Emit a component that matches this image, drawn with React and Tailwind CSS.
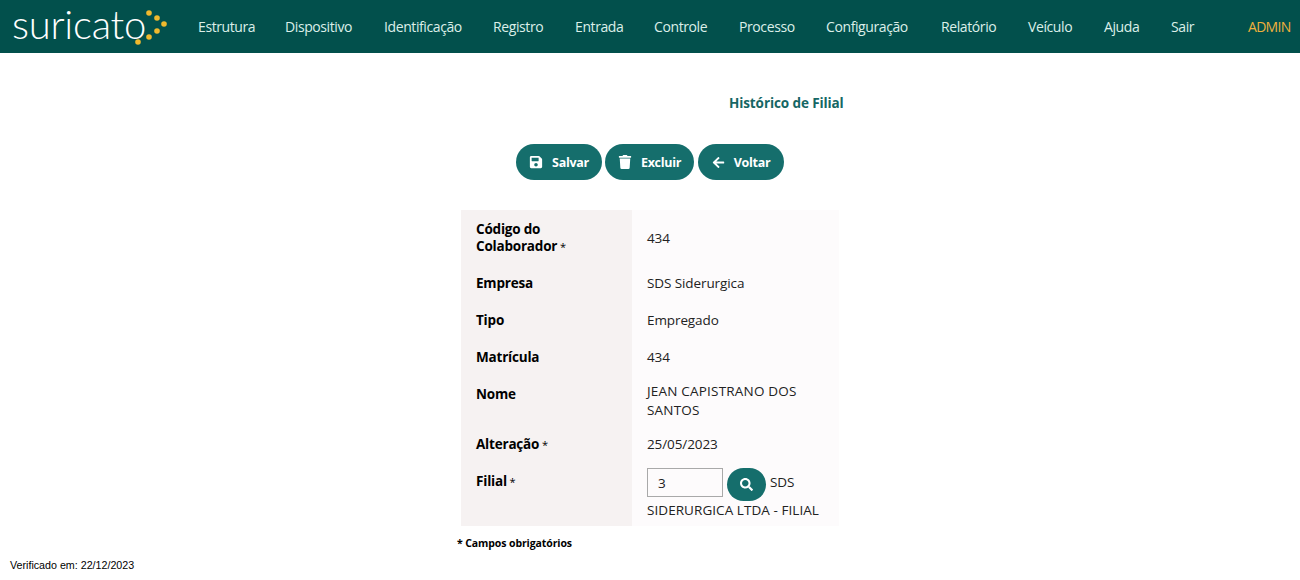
import { FaSave, FaTrash, FaArrowLeft, FaSearch } from "react-icons/fa";

const menu = [
  ["Estrutura", "w-[87px]"],
  ["Dispositivo", "w-[99px]"],
  ["Identificação", "w-[109px]"],
  ["Registro", "w-[82px]"],
  ["Entrada", "w-[79px]"],
  ["Controle", "w-[85px]"],
  ["Processo", "w-[87px]"],
  ["Configuração", "w-[115px]"],
  ["Relatório", "w-[87px]"],
  ["Veículo", "w-[76px]"],
  ["Ajuda", "w-[67px]"],
  ["Sair", "w-[77px]"],
];

function Logo() {
  return (
    <div className="relative w-[198px] shrink-0 pb-1 pl-3">
      <span className="block font-['Lato'] text-[40px] leading-[49px] font-light tracking-[-0.25px] text-white">suricato</span>
      <svg className="absolute left-0 top-0" width="186" height="53" viewBox="0 0 186 53">
        <g fill="#f0b92d">
          <circle cx="149" cy="13" r="2.8" />
          <circle cx="157" cy="18" r="2.8" />
          <circle cx="164" cy="24" r="2.8" />
          <circle cx="157" cy="31" r="2.8" />
          <circle cx="149" cy="37" r="2.8" />
          <circle cx="138" cy="42" r="2.8" />
        </g>
      </svg>
    </div>
  );
}

function Header() {
  return (
    <header className="flex h-[53px] items-center bg-[#02504c] pr-[10px]">
      <Logo />
      <nav className="flex">
        {menu.map(([label, width]) => (
          <a key={label} className={`${width} text-[14px] tracking-[-0.4px] text-[#dcefe9]`}>
            {label}
          </a>
        ))}
      </nav>
      <span className="ml-auto text-[14px] tracking-[-0.7px] text-[#f0b13c]">ADMIN</span>
    </header>
  );
}

function ActionButton({ icon, label, className }) {
  return (
    <button className={`flex h-9 items-center justify-center gap-[9px] rounded-[18px] bg-[#156e6c] text-[12.5px] font-bold tracking-[-0.3px] text-white ${className}`}>
      {icon}
      <span className="pt-[2px]">{label}</span>
    </button>
  );
}

function Label({ children, required }) {
  return (
    <th className="w-[171px] bg-[#f6f2f2] px-[15px] pt-[11px] pb-[9px] text-left align-top text-[13.5px] leading-[17px] font-bold tracking-[-0.2px] text-black">
      {children}
      {required && <span className="text-[11px] font-normal"> *</span>}
    </th>
  );
}

function Value({ children }) {
  return <td className="bg-[#fdfbfc] px-[15px] pt-[7px] pb-[5px] align-middle text-[13.5px] leading-[19px] tracking-[-0.1px] text-[#222]">{children}</td>;
}

export default function App() {
  return (
    <div className="relative h-[580px] bg-white font-['Open_Sans',sans-serif]">
      <Header />
      <h1 className="mt-[42px] ml-[729px] text-[13.5px] leading-4 font-bold tracking-[-0.1px] text-[#156664]">Histórico de Filial</h1>
      <div className="mt-[33px] flex justify-center gap-[3px]">
        <ActionButton className="w-[86px]" icon={<FaSave size={14} />} label="Salvar" />
        <ActionButton className="w-[89px]" icon={<FaTrash size={14} />} label="Excluir" />
        <ActionButton className="ml-[1px] w-[86px]" icon={<FaArrowLeft size={13} />} label="Voltar" />
      </div>
      <table className="mx-auto mt-[30px] w-[378px] table-fixed border-collapse">
        <tbody>
          <tr>
            <Label required>
              Código do
              <br />
              Colaborador
            </Label>
            <Value>434</Value>
          </tr>
          <tr>
            <Label>Empresa</Label>
            <Value>SDS Siderurgica</Value>
          </tr>
          <tr>
            <Label>Tipo</Label>
            <Value>Empregado</Value>
          </tr>
          <tr>
            <Label>Matrícula</Label>
            <Value>434</Value>
          </tr>
          <tr>
            <Label>Nome</Label>
            <Value>
              <span className="tracking-[0.2px]">
                JEAN CAPISTRANO DOS
                <br />
                SANTOS
              </span>
            </Value>
          </tr>
          <tr>
            <Label required>Alteração</Label>
            <Value>25/05/2023</Value>
          </tr>
          <tr>
            <Label required>Filial</Label>
            <Value>
              <div className="-mt-[1px] flex items-start">
                <input readOnly value="3" className="h-[29px] w-[76px] border border-[#a9a9a9] bg-transparent px-[10px] text-[13.5px] text-[#222]" />
                <button className="ml-1 flex h-[33px] w-[39px] items-center justify-center rounded-full bg-[#156e6c] text-white">
                  <FaSearch size={13} />
                </button>
                <span className="ml-1 mt-[5px]">SDS</span>
              </div>
              <div className="mb-[1px] tracking-[0.06px]">SIDERURGICA LTDA - FILIAL</div>
            </Value>
          </tr>
        </tbody>
      </table>
      <p className="mt-[10px] ml-[457px] text-[10.5px] leading-[14px] font-bold tracking-[-0.1px] text-black">* Campos obrigatórios</p>
      <p className="absolute bottom-[9px] left-[10px] font-['Liberation_Sans',sans-serif] text-[10.7px] leading-3 text-black">Verificado em: 22/12/2023</p>
    </div>
  );
}
